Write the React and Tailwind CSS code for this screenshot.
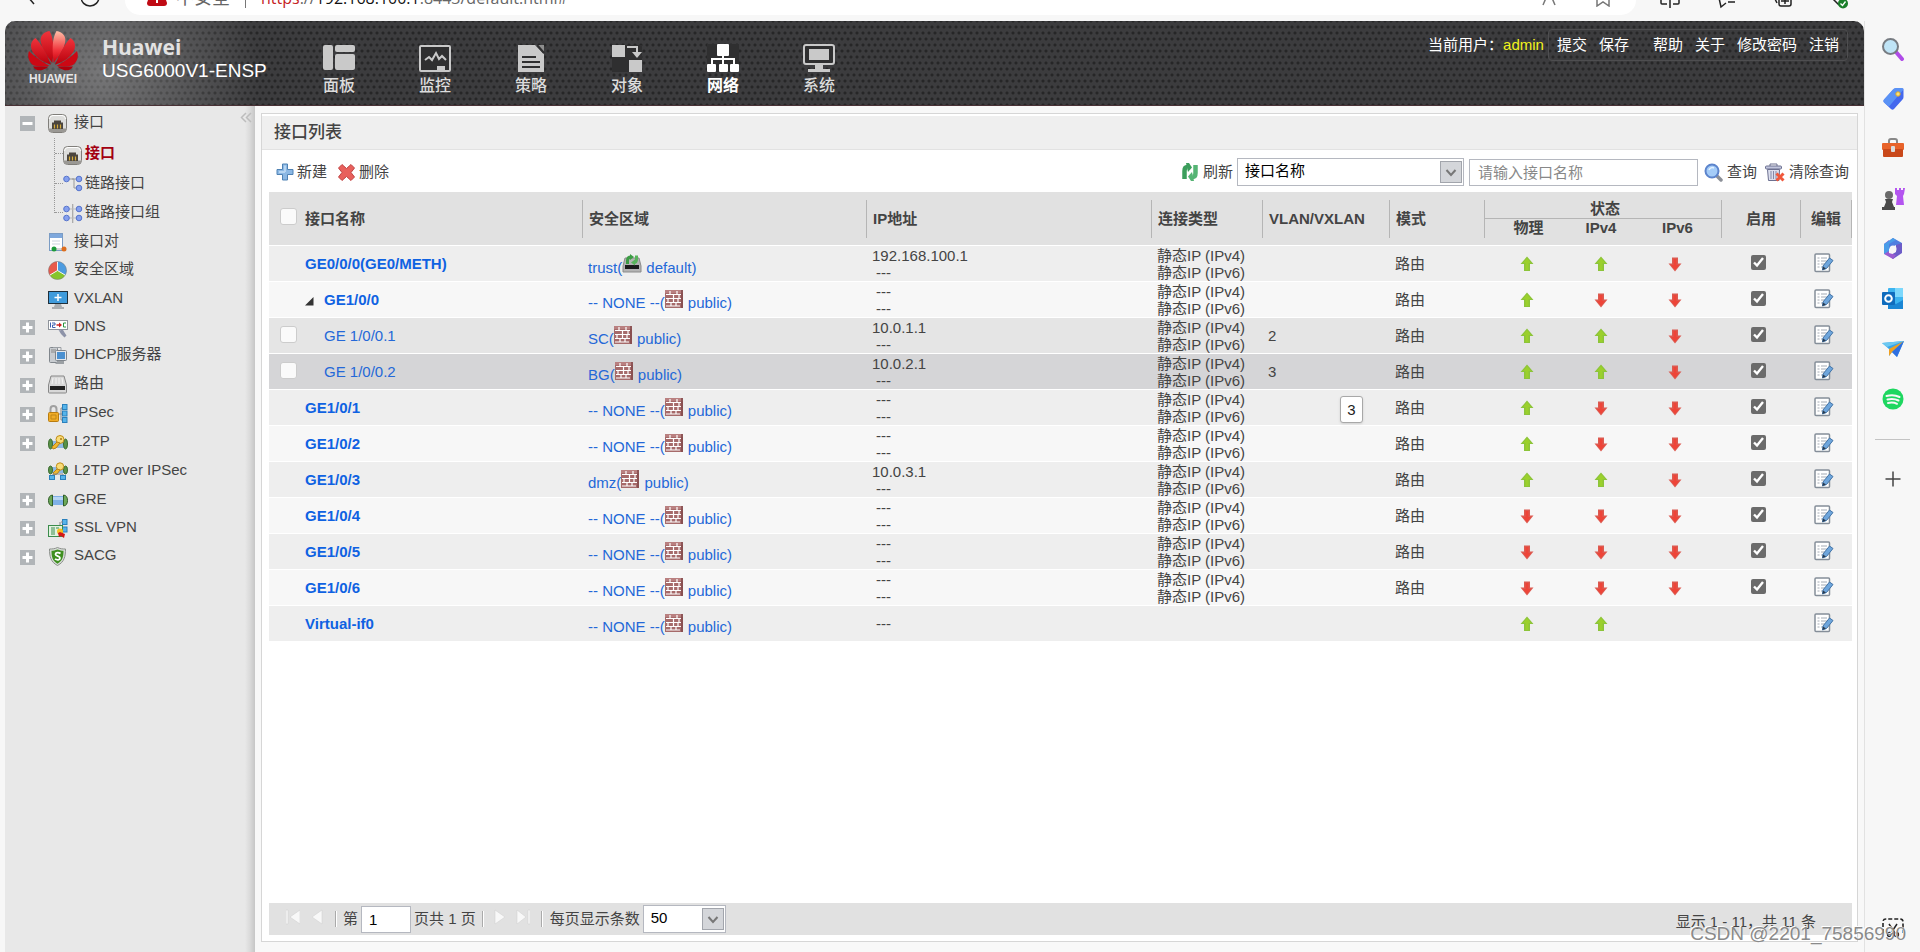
import React from "react";

const interfaces = [
  { name: "GE0/0/0(GE0/METH)", zone: "trust", vsys: "default", ip: "192.168.100.1", phy: 1, v4: 1, v6: 0, shade: "bg-[#eeeeee]" },
  { name: "GE1/0/0", open: true, zone: "-- NONE --", vsys: "public", ip: "---", phy: 1, v4: 0, v6: 0, shade: "bg-[#f7f7f7]" },
  { name: "GE 1/0/0.1", sub: true, zone: "SC", vsys: "public", ip: "10.0.1.1", vlan: "2", phy: 1, v4: 1, v6: 0, shade: "bg-[#e5e5e5]" },
  { name: "GE 1/0/0.2", sub: true, zone: "BG", vsys: "public", ip: "10.0.2.1", vlan: "3", phy: 1, v4: 1, v6: 0, shade: "bg-[#d5d5d7]" },
  { name: "GE1/0/1", zone: "-- NONE --", vsys: "public", ip: "---", phy: 1, v4: 0, v6: 0, shade: "bg-[#eeeeee]", tip: "3" },
  { name: "GE1/0/2", zone: "-- NONE --", vsys: "public", ip: "---", phy: 1, v4: 0, v6: 0, shade: "bg-[#f7f7f7]" },
  { name: "GE1/0/3", zone: "dmz", vsys: "public", ip: "10.0.3.1", phy: 1, v4: 1, v6: 0, shade: "bg-[#eeeeee]" },
  { name: "GE1/0/4", zone: "-- NONE --", vsys: "public", ip: "---", phy: 0, v4: 0, v6: 0, shade: "bg-[#f7f7f7]" },
  { name: "GE1/0/5", zone: "-- NONE --", vsys: "public", ip: "---", phy: 0, v4: 0, v6: 0, shade: "bg-[#eeeeee]" },
  { name: "GE1/0/6", zone: "-- NONE --", vsys: "public", ip: "---", phy: 0, v4: 0, v6: 0, shade: "bg-[#f7f7f7]" },
  { name: "Virtual-if0", virtual: true, zone: "-- NONE --", vsys: "public", ip: "---", phy: 1, v4: 1, shade: "bg-[#eeeeee]" },
];

/* ---------- drawings ---------- */

function HuaweiLogo() {
  return (
    <svg width="50" height="40" viewBox="0 0 50 40" aria-hidden="true">
      <defs>
        <linearGradient id="petal" x1="0" y1="0" x2="0" y2="1">
          <stop offset="0" stopColor="#f0343c" />
          <stop offset="1" stopColor="#b8000c" />
        </linearGradient>
        <linearGradient id="petalLight" x1="0" y1="0" x2="0" y2="1">
          <stop offset="0" stopColor="#ffc0a8" />
          <stop offset="0.6" stopColor="#f0343c" />
          <stop offset="1" stopColor="#c8000c" />
        </linearGradient>
      </defs>
      <path d="M24.300 32C26 20 26 7 21.500 0 14.500 1 11.500 6 13 12 15 20 20 26 24.300 32z" fill="url(#petal)" />
      <path d="M25.700 32C24 20 24 7 28.500 0 35.500 1 38.500 6 37 12 35 20 30 26 25.700 32z" fill="url(#petalLight)" />
      <path d="M23 33.500C19 24 13.500 13 7.500 7 2 10.500 2 16 5 21.500 9.500 28 16 31.500 23 33.500z" fill="url(#petal)" />
      <path d="M27 33.500C31 24 36.500 13 42.500 7 48 10.500 48 16 45 21.500 40.500 28 34 31.500 27 33.500z" fill="url(#petal)" />
      <path d="M21.500 34.800C14 31 6 25 1 20 -1 26 1 32 6 34.500 11 36 17 35.500 21.500 34.800z" fill="#cc0814" />
      <path d="M28.500 34.800C36 31 44 25 49 20 51 26 49 32 44 34.500 39 36 33 35.500 28.500 34.800z" fill="#cc0814" />
      <path d="M20.500 35.500H5C7 39 11 40 14 39 17 38 19 37 20.500 35.500z" fill="#b0000c" />
      <path d="M29.500 35.500H45C43 39 39 40 36 39 33 38 31 37 29.500 35.500z" fill="#b0000c" />
    </svg>
  );
}

const navShapes = {
  panel: (
    <g fill="#c9c9c9">
      <rect x="0" y="1" width="10" height="25" rx="2" />
      <rect x="12" y="1" width="20" height="7" rx="2" />
      <rect x="12" y="10" width="20" height="16" rx="2" />
    </g>
  ),
  monitor: (
    <g>
      <rect x="1" y="2" width="30" height="25" rx="1" fill="#2f2f30" stroke="#c9c9c9" strokeWidth="2" />
      <path d="M6 16l4-3 3 3 4-7 3 6 3-3 4 4" fill="none" stroke="#c9c9c9" strokeWidth="2" />
      <rect x="18" y="22" width="8" height="5" fill="#c9c9c9" />
    </g>
  ),
  policy: (
    <g>
      <path d="M3 1h17l9 9v18H3z" fill="#c9c9c9" />
      <path d="M21 1h8v9z" fill="#8e8e8e" />
      <path d="M22 1l7 8" stroke="#2f2f30" strokeWidth="2" />
      <path d="M7 13h14M7 18h18M7 23h18" stroke="#2f2f30" strokeWidth="2" />
    </g>
  ),
  object: (
    <g>
      <rect x="1" y="1" width="30" height="27" fill="#2f2f30" />
      <rect x="1" y="1" width="13" height="12" fill="#c9c9c9" />
      <rect x="18" y="16" width="13" height="12" fill="#c9c9c9" />
      <path d="M16 3h10v7" fill="none" stroke="#c9c9c9" strokeWidth="2" />
      <path d="M21 8h10l-5 6z" fill="#c9c9c9" />
    </g>
  ),
  network: (
    <g fill="#fff">
      <rect x="0" y="0" width="32" height="28" fill="#2f2f30" />
      <rect x="10" y="0" width="12" height="12" rx="1" />
      <path d="M16 12v8M5 21v-6h22v6" fill="none" stroke="#fff" strokeWidth="2" />
      <rect x="0" y="20" width="9" height="8" rx="1" />
      <rect x="12" y="20" width="9" height="8" rx="1" />
      <rect x="23" y="20" width="9" height="8" rx="1" />
    </g>
  ),
  system: (
    <g>
      <rect x="1" y="1" width="30" height="19" rx="2" fill="#2f2f30" stroke="#c9c9c9" strokeWidth="2" />
      <rect x="6" y="5" width="20" height="11" fill="#c9c9c9" />
      <path d="M12 21h8v4h7v3H5v-3h7z" fill="#c9c9c9" />
    </g>
  ),
};

function PortIcon() {
  return (
    <svg width="19" height="19" viewBox="0 0 19 19" aria-hidden="true">
      <rect x="0.500" y="0.500" width="18" height="18" rx="4" fill="#dededc" stroke="#807e7a" />
      <path d="M1.500 5q0-3.500 3.500-3.500h9q3.500 0 3.500 3.500" fill="none" stroke="#fff" />
      <path d="M1 14.500h17v1.500a2 2 0 0 1-2 2H3a2 2 0 0 1-2-2z" fill="#9a9894" />
      <path d="M4 8.500h2V6.500h7v2h2v6.500H4z" fill="#4b453e" />
      <path d="M6.500 10.500v4M9.500 10.500v4M12.500 10.500v4" stroke="#d6ac3c" strokeWidth="1.200" />
    </svg>
  );
}

const bead = { fill: "#86a0ee", stroke: "#5674cc" };

const sideShapes = {
  link: (
    <g>
      <path d="M6 4h5v9h4" fill="none" stroke="#999" />
      <path d="M9 4h7" stroke="#999" />
      <circle cx="3.500" cy="4" r="2.800" {...bead} />
      <circle cx="16" cy="4" r="2.800" {...bead} />
      <circle cx="16" cy="13" r="2.800" {...bead} />
    </g>
  ),
  linkGroup: (
    <g>
      <path d="M9.750 0v19" stroke="#999" />
      <path d="M3 5h13M3 14h13" stroke="#bbb" />
      <circle cx="3.500" cy="5" r="2.800" {...bead} />
      <circle cx="16" cy="5" r="2.800" {...bead} />
      <circle cx="3.500" cy="14" r="2.800" {...bead} />
      <circle cx="16" cy="14" r="2.800" {...bead} />
    </g>
  ),
  pair: (
    <g>
      <rect x="1.500" y="0.500" width="13" height="17" fill="#fff" stroke="#7b9cc4" />
      <rect x="2" y="1" width="12" height="4" fill="#7fa8dc" />
      <path d="M4 8h8M4 11h8" stroke="#cbd3dc" />
      <path d="M6 16h10" stroke="#aaa" />
      <circle cx="6" cy="16" r="2.500" fill="#1c9a38" />
      <circle cx="16" cy="16" r="2.500" fill="#dd6d1e" />
    </g>
  ),
  zone: (
    <g>
      <path d="M9.500 9.500L1.700 14A9 9 0 0 1 9.500 0.500z" fill="#e85a4c" />
      <path d="M9.500 9.500V0.500A9 9 0 0 1 17.300 14z" fill="#4c9be0" />
      <path d="M9.500 9.500L17.300 14A9 9 0 0 1 1.700 14z" fill="#86c52c" />
      <circle cx="9.500" cy="9.500" r="9" fill="none" stroke="#777" strokeOpacity="0.5" />
      <path d="M9.500 9.500V1M9.500 9.500L2 14M9.500 9.500l7.500 4.500" stroke="#f4f4f4" />
    </g>
  ),
  vxlan: (
    <g>
      <rect x="0" y="1" width="20" height="13" fill="#20303c" />
      <rect x="1" y="2" width="18" height="11" fill="#3f9bdc" />
      <path d="M10 4v7M6.500 7.500h7" stroke="#fff" strokeWidth="1.500" />
      <path d="M7 14h6l1 3h2v2H4v-2h2z" fill="#aaadb0" />
    </g>
  ),
  dns: (
    <g>
      <rect x="0.500" y="2.500" width="19" height="9" fill="#fff" stroke="#8e939a" />
      <path d="M2.500 4.500v5M4 5h3v2H4.500v2.500H7.500" fill="none" stroke="#3c62b0" />
      <path d="M8.500 7h3" stroke="#cc2020" strokeWidth="1.500" />
      <path d="M11 4.500l3 2.500-3 2.500z" fill="#cc2020" />
      <path d="M18 5h-2.500v4H18" fill="none" stroke="#2a9440" />
      <path d="M10 11l2 1.500 2.500-1.500 2 3.500 2 3-2 2-3.500-3.500z" fill="#8d93a8" />
    </g>
  ),
  dhcp: (
    <g>
      <rect x="1.500" y="1.500" width="8" height="15" rx="1" fill="#c8ccd0" stroke="#80868c" />
      <path d="M5 1.500h8v4" fill="none" stroke="#9a9fa4" />
      <path d="M3 4h5M3 6h5" stroke="#888" />
      <rect x="7.500" y="4.500" width="11" height="10" rx="1" fill="#e4e8ec" stroke="#80868c" />
      <rect x="9" y="6" width="8" height="7" fill="#4a90d0" />
      <path d="M10 15h6v3H7z" fill="#9ba0a4" />
    </g>
  ),
  route: (
    <g>
      <path d="M3 1h13l2.500 9v7a1 1 0 0 1-1 1h-16a1 1 0 0 1-1-1v-7z" fill="#d8d8d8" stroke="#888" />
      <path d="M5 3l-1 6M8 3v6M11 3v6M14 3l1 6" stroke="#f5f5f5" />
      <rect x="2" y="11" width="15" height="4" fill="#222" />
    </g>
  ),
  ipsec: (
    <g>
      <path d="M2.500 9V5a3 3 0 0 1 6 0v4" fill="none" stroke="#a0a0a0" strokeWidth="2" />
      <rect x="0.500" y="8.500" width="10" height="9" rx="1" fill="#f0ac28" stroke="#b87c10" />
      <path d="M3 11h5v4H3z" fill="none" stroke="#c08818" />
      <path d="M11 10h3M13 4v12M13 4h3M13 16h3" fill="none" stroke="#888" />
      <rect x="14.500" y="0.500" width="4.500" height="5" fill="#56b4ea" stroke="#2a80bc" />
      <rect x="14.500" y="7" width="4.500" height="5" fill="#56b4ea" stroke="#2a80bc" />
      <rect x="14.500" y="13.500" width="4.500" height="5" fill="#56b4ea" stroke="#2a80bc" />
    </g>
  ),
  l2tp: (
    <g>
      <rect x="3" y="8" width="14" height="7" fill="#8db8e4" />
      <ellipse cx="2.500" cy="11" rx="2" ry="5" fill="#5a9448" stroke="#3c6c30" />
      <ellipse cx="17.500" cy="11" rx="2" ry="5" fill="#5a9448" stroke="#3c6c30" />
      <circle cx="12" cy="6.500" r="4" fill="#f8dc78" stroke="#c08c18" />
      <path d="M9 9l-5 5 1 2 3-1 4-5z" fill="#f0b830" stroke="#b88418" />
      <circle cx="13" cy="6" r="1" fill="#a87810" />
    </g>
  ),
  l2tpIpsec: (
    <g>
      <rect x="3" y="5" width="14" height="6" fill="#8db8e4" />
      <ellipse cx="2.500" cy="8" rx="2" ry="4" fill="#5a9448" stroke="#3c6c30" />
      <ellipse cx="17.500" cy="8" rx="2" ry="4" fill="#5a9448" stroke="#3c6c30" />
      <circle cx="12" cy="4.500" r="3.700" fill="#f8dc78" stroke="#c08c18" />
      <path d="M9 7l-4 4 1 2 3-1 3-4z" fill="#f0b830" stroke="#b88418" />
      <path d="M5 14v-2h10v2" fill="none" stroke="#888" />
      <rect x="1.500" y="13.500" width="5" height="4" fill="#56b4ea" stroke="#2a80bc" />
      <rect x="12.500" y="13.500" width="5" height="4" fill="#56b4ea" stroke="#2a80bc" />
    </g>
  ),
  gre: (
    <g>
      <rect x="3" y="5" width="14" height="9" fill="#7fb0e6" />
      <rect x="4" y="6" width="12" height="3" fill="#b8d6f4" />
      <path d="M4.500 4Q0.500 4.500 0.500 9.500T4.500 15z" fill="#6ca858" stroke="#2f5c28" />
      <path d="M15.500 4Q19.500 4.500 19.500 9.500T15.500 15z" fill="#6ca858" stroke="#2f5c28" />
    </g>
  ),
  ssl: (
    <g>
      <rect x="14.500" y="0.500" width="4.500" height="5" fill="#56b4ea" stroke="#2a80bc" />
      <rect x="14.500" y="8" width="4.500" height="5" fill="#56b4ea" stroke="#2a80bc" />
      <path d="M13 3h2M12 3v4" stroke="#888" />
      <rect x="0.500" y="6.500" width="14" height="11" fill="#e2f2e0" stroke="#3b8c4c" />
      <path d="M3 9h4M3 11h4M3 13h4M3 15h4M8 9h3" stroke="#3b8c4c" />
      <circle cx="12" cy="12.500" r="3" fill="#f8c020" />
      <path d="M10 14l2-1 5 2-1 4-3-2-2 1z" fill="#d41818" />
    </g>
  ),
  sacg: (
    <g>
      <path d="M9.500 0.500c3 1.500 5.500 1.500 8 1.500 0 7-1 13-8 16.500C2.500 15 1.500 9 1.500 2c2.500 0 5 0 8-1.500z" fill="#d8dcd8" stroke="#8a8f8a" />
      <path d="M9.500 2.500c2.500 1 4 1.200 6 1.200 0 6-1 10-6 13-5-3-6-7-6-13 2 0 3.500-.2 6-1.200z" fill="#3f8f20" />
      <path d="M12.500 6.500c-2-1.500-5-1-5 .8 0 2.200 4.500 1.500 4.500 3.800 0 2-3 2.300-5 .8" fill="none" stroke="#fff" strokeWidth="1.800" />
    </g>
  ),
};

function SideIcon({ kind }) {
  if (kind === "port") return <PortIcon />;
  return (
    <svg width="20" height="20" viewBox="0 0 20 20" aria-hidden="true">
      {sideShapes[kind]}
    </svg>
  );
}

function Arrow({ up }) {
  return up ? (
    <svg width="14" height="16" viewBox="0 0 14 16" role="img" aria-label="up" className="inline">
      <path d="M7 0.500L13.500 8H10v7H4V8H0.500z" fill="#8cc43a" />
      <path d="M7 2L11 7H8.500v7H5.500V7H3z" fill="#9bd02c" />
    </svg>
  ) : (
    <svg width="14" height="16" viewBox="0 0 14 16" role="img" aria-label="down" className="inline">
      <path d="M4 1.500h6v6h3.500L7 15.500 0.500 7.500H4z" fill="#dc5a50" />
      <path d="M5.500 3h3v6h2.500L7 14 3 9h2.500z" fill="#ee4438" />
    </svg>
  );
}

function VsysIcon({ kind }) {
  if (kind === "default") {
    return (
      <svg width="20" height="19" viewBox="0 0 20 19" className="inline align-baseline" aria-hidden="true">
        <path d="M3 4h14l2 8v6H1v-6z" fill="#b4b4b4" stroke="#8a8a8a" />
        <rect x="3" y="11" width="14" height="4" fill="#1c1c1c" />
        <path d="M5.500 10V6.500Q5.500 3 9 3" fill="none" stroke="#3c9c44" strokeWidth="3" />
        <path d="M8 0l4 3-4 3z" fill="#3c9c44" />
        <path d="M14.500 1.500V5Q14.500 8.500 12 8.500" fill="none" stroke="#58b45c" strokeWidth="3" />
        <path d="M13 11.500l-4-3 4-3z" fill="#58b45c" />
      </svg>
    );
  }
  return (
    <svg width="18" height="18" viewBox="0 0 18 18" className="mr-px inline align-baseline" aria-hidden="true">
      <rect width="18" height="18" fill="#a66a6a" />
      <path d="M0 0h18v3H0z" fill="#b98080" />
      <path d="M1 4.500h15M1 8.500h15M1 12.500h15M1 16h14M5 1v3M12 1v3M8.500 4v5M3 8v4M13 8v4M6 12v4M11 12v4M8.500 8v5M14 4v4" stroke="#fff" strokeWidth="1.200" />
      <path d="M17 0v18" stroke="#80484a" strokeWidth="1.500" />
    </svg>
  );
}

function EditIcon() {
  return (
    <svg width="20" height="20" viewBox="0 0 20 20" aria-hidden="true">
      <rect x="1" y="1" width="14.500" height="17.500" rx="1" fill="#fff" stroke="#858e99" strokeWidth="1.500" />
      <path d="M3.500 5h2M3.500 8h2M3.500 11h2M3.500 14h2M7 5h6M7 8h6M7 11h4M7 14h3" stroke="#a4abb4" />
      <path d="M15.500 5l3.500 2.500-6.500 8-4 1.500.5-4z" fill="#6fa6dc" stroke="#4475a8" />
      <path d="M9 13.500l3 2-3.500 1.500z" fill="#2a3c50" />
    </svg>
  );
}

const edgeShapes = {
  search: (
    <g>
      <path d="M15 15l6 7" stroke="#b04ce8" strokeWidth="4" strokeLinecap="round" />
      <circle cx="9.500" cy="9.500" r="7.500" fill="#bfe4f6" stroke="#777c82" strokeWidth="2" />
    </g>
  ),
  tag: (
    <g>
      <path d="M12 2.500Q13 1 15 1h6q1.500 0 1.500 1.500V10q0 1.500-1 2.500L13 22q-1.500 1.500-3 0L3 15.500q-1.500-1.500 0-3z" fill="#4468ee" />
      <path d="M12 2.500Q13 1 15 1h6q1.500 0 1.500 1.500L8 19.500 3 15.500q-1.500-1.500 0-3z" fill="#64a4f8" opacity="0.700" />
      <circle cx="17" cy="7" r="2.200" fill="#f8e27c" stroke="#e0a828" />
    </g>
  ),
  toolbox: (
    <g>
      <path d="M8 6V4q0-2 2-2h4q2 0 2 2v2" fill="none" stroke="#888" strokeWidth="2" />
      <rect x="1" y="6" width="22" height="7" rx="1" fill="#e8632a" />
      <rect x="2" y="12" width="20" height="8" rx="1" fill="#c9481a" />
      <rect x="10" y="9" width="4" height="6" rx="1" fill="#dcdcdc" />
    </g>
  ),
  games: (
    <g>
      <path d="M14 1h2v2h2V1h2v2h2V1h2l-1 6-1 2 1 9h-8l1-9-2-2z" fill="#b455f0" />
      <circle cx="8" cy="8" r="4" fill="#6a6a6a" />
      <path d="M4 12h8l-1 3 2 5h1v3H1v-3h2l2-5z" fill="#4a4a4a" />
    </g>
  ),
  m365: (
    <g>
      <path d="M12 1l9 5v6l-6-4-7 4V4z" fill="#4f7fe0" />
      <path d="M21 6v10l-9 6-4-3 7-4V8z" fill="#6c5cc8" />
      <path d="M12 22l-9-5V7l5-4v13l7 2z" fill="#9a5cd0" />
      <path d="M3 7l9-6 3 2-7 4v7l-5 3z" fill="#4a9ce8" />
      <circle cx="12" cy="12" r="3.500" fill="#f7f7f7" />
    </g>
  ),
  outlook: (
    <g>
      <rect x="7" y="1" width="15" height="20" rx="1" fill="#3cb4f0" />
      <rect x="14" y="1" width="8" height="9" fill="#7cd8fc" />
      <path d="M7 13l8 4 7-4v9H7z" fill="#1a86d4" />
      <rect x="1" y="5" width="13" height="13" rx="1" fill="#0f6cbd" />
      <circle cx="7.500" cy="11.500" r="3.300" fill="none" stroke="#fff" strokeWidth="2" />
    </g>
  ),
  plane: (
    <g>
      <path d="M1 6l22-2-7 16-5-5-3 4v-7z" fill="#38a4ec" />
      <path d="M23 4L8 12v7l3-4z" fill="#f0a020" />
      <path d="M1 6l22-2L6 10z" fill="#6cc8f0" />
      <path d="M23 4l-7 16-5-5z" fill="#2f6fe0" />
    </g>
  ),
  music: (
    <g>
      <circle cx="12" cy="12" r="10.500" fill="#1ed760" />
      <path d="M5.500 9q7-2 13 1M6.500 12.500q6-1.500 11 1M7 16q5-1.200 9 .8" fill="none" stroke="#f7f7f7" strokeWidth="2" strokeLinecap="round" />
    </g>
  ),
};

/* ---------- building blocks ---------- */

function BrowserBar() {
  return (
    <div className="flex h-[21px] shrink-0 items-start overflow-hidden bg-[#f7f7f7] text-[#222]">
      <div className="flex w-[125px] shrink-0 gap-[43px] pl-6">
        <svg width="14" height="8" viewBox="0 0 14 8" aria-hidden="true">
          <path d="M4 -3l6 7" fill="none" stroke="#222" strokeWidth="1.500" />
        </svg>
        <svg width="22" height="8" viewBox="0 0 22 8" aria-hidden="true">
          <circle cx="9" cy="-3" r="9" fill="none" stroke="#222" strokeWidth="1.500" />
        </svg>
      </div>
      <div className="flex h-[15px] flex-1 items-start rounded-b-[15px] bg-white pl-[22px] pr-[26px]">
        <svg width="20" height="6" viewBox="0 0 20 6" aria-hidden="true">
          <path d="M1 0L0 3q0 3 3 3h14q3 0 3-3l-1-3z" fill="#c00a14" />
          <path d="M10 0v3" stroke="#fff" strokeWidth="2" />
        </svg>
        <div className="-mt-[14px] flex h-6 items-center text-lg leading-6 text-[#666]">
          <span className="pl-[9px]">不安全</span>
          <span className="mx-[15px] h-5 w-px bg-[#777]" />
          <span className="font-['Open_Sans','Noto_Sans',sans-serif] text-base">
            <span className="text-[#c5221f]">https</span>://<span className="text-[#111]">192.168.100.1</span>:8443/default.html#
          </span>
        </div>
        <div className="ml-auto flex gap-10">
          <svg width="14" height="6" viewBox="0 0 14 6" aria-hidden="true">
            <path d="M4 -2L1 5M10 -2l3 7" stroke="#777" strokeWidth="1.500" />
          </svg>
          <svg width="14" height="7" viewBox="0 0 14 7" aria-hidden="true">
            <path d="M1 -3V6l6-4 6 4V-3" fill="none" stroke="#777" strokeWidth="1.500" />
          </svg>
        </div>
      </div>
      <div className="flex shrink-0 gap-[38px] pl-6 pr-[70px]">
        <svg width="20" height="9" viewBox="0 0 20 9" aria-hidden="true">
          <path d="M1 -3V3q0 1 1 1h5M10 -3V8M13 4h5q1 0 1-1V-3" fill="none" stroke="#222" strokeWidth="1.500" />
        </svg>
        <svg width="18" height="9" viewBox="0 0 18 9" aria-hidden="true">
          <path d="M1 -2l2 9 5-4M10 2h7" fill="none" stroke="#222" strokeWidth="1.500" />
        </svg>
        <svg width="18" height="9" viewBox="0 0 18 9" aria-hidden="true">
          <path d="M5 -3V4q0 2 2 2h8q2 0 2-2V-3M7 1h8M11 -2v6M1 -1l2 4" fill="none" stroke="#222" strokeWidth="1.500" />
        </svg>
        <svg width="20" height="10" viewBox="0 0 20 10" aria-hidden="true">
          <path d="M3 -1l6 6" stroke="#222" strokeWidth="1.500" />
          <circle cx="13" cy="3.500" r="5" fill="#1a7f2a" />
          <path d="M10.500 3.500l2 2 3-4" fill="none" stroke="#fff" strokeWidth="1.300" />
        </svg>
      </div>
    </div>
  );
}

const navItems = [
  ["panel", "面板"],
  ["monitor", "监控"],
  ["policy", "策略"],
  ["object", "对象"],
  ["network", "网络"],
  ["system", "系统"],
];

function Banner() {
  return (
    <header className="h-[85px] shrink-0 overflow-hidden rounded-t-[10px] border-b border-[#4a3236] bg-[#3c3c3e] bg-[radial-gradient(circle,#262627_1px,transparent_2px),radial-gradient(circle,#262627_1px,transparent_2px)] bg-[size:6px_12px] bg-[position:0_0,3px_6px]">
      <div className="flex h-full bg-[radial-gradient(circle_at_95px_50px,rgba(255,255,255,0.3),transparent_160px)]">
        <div className="flex w-[286px] shrink-0 gap-6 pl-[23px]">
          <div className="flex w-[50px] flex-col items-center pt-[10px]">
            <HuaweiLogo />
            <span className="text-xs font-bold leading-4 text-[#e6e6e6]">HUAWEI</span>
          </div>
          <div className="pt-3 text-white">
            <div className="font-['Open_Sans','Noto_Sans',sans-serif] text-[21px] font-bold leading-7 text-[#e2e2e2]">Huawei</div>
            <div className="whitespace-nowrap text-[19px] leading-5">USG6000V1-ENSP</div>
          </div>
        </div>
        <nav className="flex">
          {navItems.map(([key, label]) => (
            <a
              key={key}
              href={"#" + key}
              className={
                key === "network"
                  ? "flex w-24 flex-col items-center gap-[2px] pt-[23px] text-base font-bold leading-6 text-white"
                  : "flex w-24 flex-col items-center gap-[2px] pt-[23px] text-base font-medium leading-6 text-[#dcdcdc]"
              }
            >
              <svg width="32" height="28" viewBox="0 0 32 28" aria-hidden="true">
                {navShapes[key]}
              </svg>
              {label}
            </a>
          ))}
        </nav>
        <div className="ml-auto mr-4 mt-2 flex h-8 items-center text-[15px] text-white">
          <span>当前用户：</span>
          <span className="mr-1 text-[#f2f21c]">admin</span>
          <div className="flex h-8 items-center gap-3 rounded-sm border border-[#4e4e50] px-2">
            <a href="#commit">提交</a>
            <a href="#save" className="mr-3">保存</a>
            <a href="#help">帮助</a>
            <a href="#about">关于</a>
            <a href="#password">修改密码</a>
            <a href="#logout">注销</a>
          </div>
        </div>
      </div>
    </header>
  );
}

const treeItems = [
  { icon: "port", label: "接口", toggle: "minus", h: "h-8" },
  { icon: "port", label: "接口", child: true, active: true, h: "h-[31px]" },
  { icon: "link", label: "链路接口", child: true, h: "h-[29px]" },
  { icon: "linkGroup", label: "链路接口组", child: true, last: true, h: "h-[29px]" },
  { icon: "pair", label: "接口对", h: "h-7" },
  { icon: "zone", label: "安全区域", h: "h-[29px]" },
  { icon: "vxlan", label: "VXLAN", h: "h-7" },
  { icon: "dns", label: "DNS", toggle: "plus", h: "h-7" },
  { icon: "dhcp", label: "DHCP服务器", toggle: "plus", h: "h-[29px]" },
  { icon: "route", label: "路由", toggle: "plus", h: "h-[29px]" },
  { icon: "ipsec", label: "IPSec", toggle: "plus", h: "h-[29px]" },
  { icon: "l2tp", label: "L2TP", toggle: "plus", h: "h-[29px]" },
  { icon: "l2tpIpsec", label: "L2TP over IPSec", h: "h-[29px]" },
  { icon: "gre", label: "GRE", toggle: "plus", h: "h-7" },
  { icon: "ssl", label: "SSL VPN", toggle: "plus", h: "h-7" },
  { icon: "sacg", label: "SACG", toggle: "plus", h: "h-[29px]" },
];

function Toggle({ kind }) {
  return (
    <button type="button" aria-label={kind === "plus" ? "展开" : "折叠"}>
      <svg width="15" height="15" viewBox="0 0 15 15">
        <rect width="15" height="15" fill="#b1b5b8" />
        <path d={kind === "plus" ? "M2.500 7.500h10M7.500 2.500v10" : "M2.500 7.500h10"} stroke="#fff" strokeWidth="3" />
      </svg>
    </button>
  );
}

function Sidebar() {
  return (
    <aside className="flex w-[250px] shrink-0 bg-[#e8e8e8] bg-[linear-gradient(to_right,transparent_240px,#dadada_245px,#c6c6c6)]">
      <ul className="flex-1 text-[15px] text-[#444]">
        {treeItems.map((item, i) => (
          <li key={i} className={"flex items-center pl-[15px] " + item.h}>
            <span className="mr-3 flex w-4 shrink-0 pt-[3px]">{item.toggle && <Toggle kind={item.toggle} />}</span>
            {item.child && (
              <span className="flex w-[15px] shrink-0 self-stretch pl-[6px]">
                <span className={item.last ? "h-1/2 w-px border-l border-dotted border-[#999]" : "h-full w-px border-l border-dotted border-[#999]"} />
                <span className="h-1/2 w-2 border-b border-dotted border-[#999]" />
              </span>
            )}
            <a href={"#" + item.icon} className="flex items-center">
              <span className="flex w-5 pt-[3px]">
                <SideIcon kind={item.icon} />
              </span>
              <span className={item.active ? "ml-[2px] font-bold text-[#a30010]" : item.child ? "ml-[2px]" : "ml-[6px]"}>{item.label}</span>
            </a>
          </li>
        ))}
      </ul>
      <button type="button" aria-label="收起" className="mr-[3px] flex h-[22px] w-3 items-center justify-center self-start text-[#bdbdbd]">
        <svg width="12" height="11" viewBox="0 0 12 11">
          <path d="M6 1L1.500 5.500 6 10M11 1L6.500 5.500 11 10" fill="none" stroke="currentColor" strokeWidth="1.500" />
        </svg>
      </button>
    </aside>
  );
}

function Dropdown({ label, options, className }) {
  return (
    <div className={"relative h-7 " + className}>
      <select aria-label={label} className="h-full w-full appearance-none border border-[#b5b8c0] bg-white pl-[7px] pb-[2px] text-[15px] text-black outline-none">
        {options.map((o) => (
          <option key={o}>{o}</option>
        ))}
      </select>
      <svg width="22" height="22" viewBox="0 0 22 22" className="pointer-events-none absolute right-[2px] top-[3px]" aria-hidden="true">
        <rect x="0.500" y="0.500" width="21" height="21" fill="#d4d6da" stroke="#a2a5ac" />
        <path d="M6.500 9l4.500 5 4.500-5" fill="none" stroke="#777" strokeWidth="2" />
      </svg>
    </div>
  );
}

function Toolbar() {
  return (
    <div className="flex h-[42px] items-center pl-[7px] pr-[3px] pt-[2px] text-[15px] text-[#444]">
      <button type="button" className="flex items-center gap-[3px]">
        <svg width="18" height="18" viewBox="0 0 18 18" aria-hidden="true">
          <path d="M6.500 1h5v5.500H17v5h-5.500V17h-5v-5.500H1v-5h5.500z" fill="#8cb8e4" stroke="#4f82b4" />
          <path d="M9 2.500V9M3 9h6" stroke="#b8d6f2" strokeWidth="2" />
        </svg>
        新建
      </button>
      <button type="button" className="ml-[11px] flex items-center gap-1">
        <svg width="17" height="17" viewBox="0 0 17 17" aria-hidden="true">
          <path d="M4 0.500l4.500 4 4.500-4 3.500 3.500-3.500 4.500 3.500 4.500L13 16.500l-4.500-4-4.500 4L0.500 13 4 8.500 0.500 4z" fill="#e8605c" stroke="#c04444" />
        </svg>
        删除
      </button>
      <button type="button" className="ml-auto mr-1 flex items-center gap-1">
        <svg width="18" height="18" viewBox="0 0 18 18" aria-hidden="true">
          <path d="M3.500 16V8q0-4 3-4" fill="none" stroke="#3c9e5c" strokeWidth="4.500" />
          <path d="M5 0h3l3 4.500L7 9z" fill="#3c9e5c" />
          <path d="M14.500 2v8q0 4-3 4" fill="none" stroke="#55b474" strokeWidth="4.500" />
          <path d="M13 18h-3l-3-4.500L11 9z" fill="#55b474" />
        </svg>
        刷新
      </button>
      <Dropdown label="查询条件" options={["接口名称", "安全区域", "IP地址"]} className="w-[227px]" />
      <input
        type="text"
        aria-label="接口名称"
        placeholder="请输入接口名称"
        className="ml-[5px] h-[27px] w-[229px] border border-[#b5b8c0] bg-white px-2 text-[15px] outline-none placeholder:text-[#888]"
      />
      <button type="button" className="ml-[6px] flex items-center gap-1">
        <svg width="19" height="19" viewBox="0 0 19 19" aria-hidden="true">
          <path d="M12 12l5 5" stroke="#8c9098" strokeWidth="3.500" strokeLinecap="round" />
          <circle cx="8" cy="8" r="6.500" fill="#a4ccf8" stroke="#5c84cc" strokeWidth="2" />
          <path d="M5 7a3.500 3.500 0 0 1 5-2" fill="none" stroke="#e4f2ff" strokeWidth="1.500" />
        </svg>
        查询
      </button>
      <button type="button" className="ml-2 flex items-center gap-1">
        <svg width="20" height="19" viewBox="0 0 20 19" aria-hidden="true">
          <path d="M5 3V1h7v2" fill="none" stroke="#6c7090" />
          <rect x="0.500" y="3" width="16" height="3" rx="1" fill="#c0c4dc" stroke="#6c7090" />
          <path d="M2.500 6.500h12L14 17.500H3.500z" fill="#dcdfee" stroke="#6c7090" />
          <path d="M6 8v8M8.500 8v8M11 8v8" stroke="#8488a8" />
          <path d="M11.500 10.500l7 7M18.500 10.500l-7 7" stroke="#f0583c" strokeWidth="3" />
        </svg>
        清除查询
      </button>
    </div>
  );
}

function HeadCell({ children, className = "", inner = "", ...rest }) {
  return (
    <th {...rest} className={"border-b border-white p-0 text-left align-middle font-bold " + className}>
      <div className={"flex h-[38px] items-center border-[#b5b5b5] " + inner}>{children}</div>
    </th>
  );
}

const boxClass = "h-[17px] w-[17px] shrink-0 appearance-none rounded-[3px] border border-[#ccc] bg-[#fafafa] checked:bg-[#6b6b6b]";

function InterfaceTable() {
  return (
    <table className="w-full table-fixed border-separate border-spacing-0 text-[15px] leading-[17px] text-[#444]">
      <colgroup>
        <col className="w-[313px]" />
        <col className="w-[284px]" />
        <col />
        <col className="w-[111px]" />
        <col className="w-[127px]" />
        <col className="w-[95px]" />
        <col className="w-[80px]" />
        <col className="w-[74px]" />
        <col className="w-[83px]" />
        <col className="w-[79px]" />
        <col className="w-[52px]" />
      </colgroup>
      <thead className="bg-[#e1e1e1]">
        <tr className="h-[27px]">
          <HeadCell rowSpan={2} inner="pl-[11px]">
            <input type="checkbox" aria-label="全选" className={"mb-1 " + boxClass} />
            <span className="ml-2">接口名称</span>
          </HeadCell>
          <HeadCell rowSpan={2} inner="border-l pl-[6px]">安全区域</HeadCell>
          <HeadCell rowSpan={2} inner="border-l pl-[6px]">IP地址</HeadCell>
          <HeadCell rowSpan={2} inner="border-l pl-[6px]">连接类型</HeadCell>
          <HeadCell rowSpan={2} inner="border-l pl-[6px]">VLAN/VXLAN</HeadCell>
          <HeadCell rowSpan={2} inner="border-l pl-[6px]">模式</HeadCell>
          <th colSpan={3} className="p-0 align-bottom">
            <div className="h-[19px] border-b border-l border-[#b5b5b5] pl-1">状态</div>
          </th>
          <HeadCell rowSpan={2} inner="justify-center border-l">启用</HeadCell>
          <HeadCell rowSpan={2} inner="justify-center border-l border-r">编辑</HeadCell>
        </tr>
        <tr className="h-[27px]">
          <th className="border-b border-white p-0 align-top">
            <div className="h-[19px] border-l border-[#b5b5b5] pl-2">物理</div>
          </th>
          <th className="border-b border-white p-0 align-top">IPv4</th>
          <th className="border-b border-white p-0 pr-1 align-top">IPv6</th>
        </tr>
      </thead>
      <tbody>
        {interfaces.map((r) => (
          <tr key={r.name} className={"h-9 *:border-b *:border-white *:p-0 " + r.shade}>
            <td>
              <div className="flex items-center pl-[11px]">
                <span className="flex w-[25px] shrink-0 pb-[2px]">
                  {r.sub && <input type="checkbox" aria-label={r.name} className={boxClass} />}
                </span>
                {(r.open || r.sub) && (
                  <span className="w-[19px] shrink-0">
                    {r.open && (
                      <svg width="9" height="9" viewBox="0 0 9 9" className="mt-1" aria-hidden="true">
                        <path d="M8.500 0v8.500H0z" fill="#333" />
                      </svg>
                    )}
                  </span>
                )}
                <a href="#if" className={r.sub ? "text-[#2468d8]" : "font-bold text-[#0f62e2]"}>{r.name}</a>
              </div>
            </td>
            <td>
              <a href="#zone" className="block pl-[6px] pt-[2px] text-[#2468d8]">
                {r.zone}(<VsysIcon kind={r.vsys} /> {r.vsys})
              </a>
            </td>
            <td>
              <div className="pl-[6px]">
                <div className={r.ip === "---" ? "pl-1" : ""}>{r.ip}</div>
                {!r.virtual && <div className="pl-1">---</div>}
              </div>
            </td>
            <td>
              {!r.virtual && (
                <div className="pl-[6px]">
                  静态IP (IPv4)
                  <br />
                  静态IP (IPv6)
                </div>
              )}
            </td>
            <td>
              <div className="relative pl-[6px]">
                {r.vlan}
                {r.tip && (
                  <span role="tooltip" className="absolute -top-3 left-[78px] flex h-[27px] w-[23px] items-center justify-center rounded-[3px] border border-[#a8a8a8] bg-white text-[#222] shadow-sm">
                    {r.tip}
                  </span>
                )}
              </div>
            </td>
            <td>
              <div className="pl-[6px]">{!r.virtual && "路由"}</div>
            </td>
            <td className="text-center">
              <div className="pb-[2px] pl-[6px]"><Arrow up={r.phy} /></div>
            </td>
            <td className="text-center">
              <div className="pb-[2px]"><Arrow up={r.v4} /></div>
            </td>
            <td className="text-center">
              <div className="pb-[2px] pr-[10px]">{r.v6 !== undefined && <Arrow up={r.v6} />}</div>
            </td>
            <td>
              <div className="flex justify-center pb-[2px] pr-1">
                {!r.virtual && (
                  <input type="checkbox" defaultChecked aria-label={"启用 " + r.name} className="h-[15px] w-[15px] accent-[#6b6b6b]" />
                )}
              </div>
            </td>
            <td>
              <div className="flex justify-center pb-[2px] pr-1">
                <button type="button" aria-label={"编辑 " + r.name}>
                  <EditIcon />
                </button>
              </div>
            </td>
          </tr>
        ))}
      </tbody>
    </table>
  );
}

function PageButton({ d, label }) {
  return (
    <button type="button" aria-label={label} className="mb-1">
      <svg width="14" height="16" viewBox="0 0 14 16">
        <path d={d} fill="#f8f8f8" stroke="#cfcfcf" strokeWidth="0.500" />
      </svg>
    </button>
  );
}

function Divider() {
  return <span className="h-4 w-[2px] border-l border-[#aaa] bg-white" />;
}

function Pager() {
  return (
    <div className="relative flex h-8 items-center bg-[#e1e1e1] pl-[17px] pr-9 text-[15px] text-[#444]">
      <PageButton label="首页" d="M0 1h2v14H0zM14 1v14L4 8z" />
      <span className="w-[10px]" />
      <PageButton label="上一页" d="M12 1v14L2 8z" />
      <span className="w-[11px]" />
      <Divider />
      <label className="ml-[6px] flex items-center gap-[3px]">
        第
        <input type="text" defaultValue="1" className="h-[27px] w-[50px] border border-[#b5b8c0] bg-white px-[7px] text-black outline-none" />
      </label>
      <span className="ml-[3px] mr-[6px]">页共 1 页</span>
      <Divider />
      <span className="w-[10px]" />
      <PageButton label="下一页" d="M1 1v14l10-7z" />
      <span className="w-2" />
      <PageButton label="末页" d="M1 1v14l9-7zM12 1h2v14h-2z" />
      <span className="w-[11px]" />
      <Divider />
      <span className="ml-[7px] mr-[3px]">每页显示条数</span>
      <Dropdown label="每页显示条数" options={["50", "100", "200"]} className="w-[83px]" />
      <span className="ml-auto pt-[6px]">显示 1 - 11，共 11 条</span>
      <span className="pointer-events-none absolute -right-[54px] top-[19px] z-10 whitespace-nowrap text-[19px] leading-6 text-[#8a8a8a] [text-shadow:-1px_-1px_0_#fff]">
        CSDN @2201_75856990
      </span>
    </div>
  );
}

function EdgeBar() {
  return (
    <aside className="flex w-14 shrink-0 flex-col items-center border-l border-[#e2e2e2] bg-[#f7f7f7] pt-4">
      <div className="flex flex-col gap-[26px]">
        {Object.keys(edgeShapes).map((k) => (
          <button key={k} type="button" aria-label={k}>
            <svg width="24" height="24" viewBox="0 0 24 24">
              {edgeShapes[k]}
            </svg>
          </button>
        ))}
      </div>
      <hr className="mt-7 w-[35px] border-[#c4c4c4]" />
      <button type="button" aria-label="添加" className="mt-[31px]">
        <svg width="16" height="16" viewBox="0 0 16 16">
          <path d="M8 0.500v15M0.500 8h15" stroke="#444" strokeWidth="1.500" />
        </svg>
      </button>
      <button type="button" aria-label="截图" className="mb-[14px] mt-auto">
        <svg width="22" height="20" viewBox="0 0 22 20">
          <path d="M1 15V4q0-3 3-3h14q3 0 3 3v11" fill="none" stroke="#222" strokeWidth="1.600" strokeDasharray="4 2" />
          <path d="M7 6l6 9M15 6l-6 9" stroke="#222" strokeWidth="1.500" />
          <circle cx="7.500" cy="16.500" r="2" fill="none" stroke="#222" strokeWidth="1.300" />
          <circle cx="14.500" cy="16.500" r="2" fill="none" stroke="#222" strokeWidth="1.300" />
        </svg>
      </button>
    </aside>
  );
}

export default function App() {
  return (
    <div className="flex min-h-screen flex-col bg-[#f7f7f7] font-['Liberation_Sans','Noto_Sans_CJK_SC',sans-serif]">
      <BrowserBar />
      <div className="flex flex-1">
        <div className="flex min-w-0 flex-1 flex-col pl-[5px]">
          <Banner />
          <div className="flex flex-1">
            <Sidebar />
            <main className="flex min-w-0 flex-1 flex-col bg-[#f8f8f8] px-[6px] pb-[10px] pt-[7px]">
              <section className="flex flex-1 flex-col border border-[#d6d6d6] bg-white pt-[2px]">
                <h1 className="flex h-[34px] items-center border-b border-[#e2e2e2] bg-[#efefef] pl-3 text-[17px] font-medium text-[#444]">接口列表</h1>
                <div className="flex flex-1 flex-col pb-[6px] pl-[7px] pr-[5px]">
                  <Toolbar />
                  <InterfaceTable />
                  <div className="flex-1" />
                  <Pager />
                </div>
              </section>
            </main>
          </div>
        </div>
        <EdgeBar />
      </div>
    </div>
  );
}
